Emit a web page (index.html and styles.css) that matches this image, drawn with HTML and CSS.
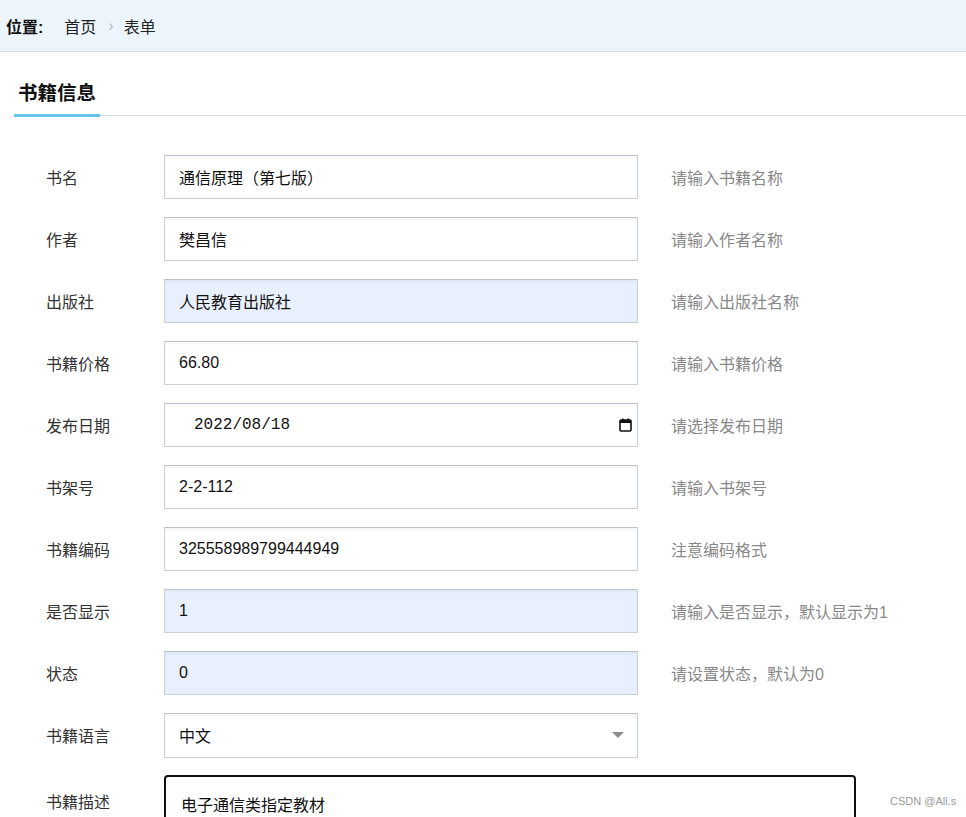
FILE: index.html
```html
<!DOCTYPE html>
<html lang="zh-CN">
<head>
<meta charset="utf-8">
<title>书籍信息</title>
<link rel="stylesheet" href="styles.css">
</head>
<body>
<div class="crumb">
  <span class="crumb-label">位置:</span>
  <span class="crumb-item">首页</span>
  <span class="crumb-sep">›</span>
  <span class="crumb-item">表单</span>
</div>
<div class="tabbar">
  <div class="tab">书籍信息</div>
</div>
<form class="form">
  <div class="row"><label class="label">书名</label><input class="field" type="text" value="通信原理（第七版）"><span class="hint">请输入书籍名称</span></div>
  <div class="row"><label class="label">作者</label><input class="field" type="text" value="樊昌信"><span class="hint">请输入作者名称</span></div>
  <div class="row"><label class="label">出版社</label><input class="field filled" type="text" value="人民教育出版社"><span class="hint">请输入出版社名称</span></div>
  <div class="row"><label class="label">书籍价格</label><input class="field" type="text" value="66.80"><span class="hint">请输入书籍价格</span></div>
  <div class="row"><label class="label">发布日期</label>
    <div class="date-wrap"><input class="field date" type="text" value="2022/08/18">
      <svg class="cal" width="13" height="14" viewBox="0 0 13 14"><rect x="1" y="2" width="11" height="11" rx="1" fill="none" stroke="#111" stroke-width="1.6"/><rect x="1" y="2" width="11" height="3" fill="#111"/><rect x="3" y="0.5" width="1.6" height="2.5" fill="#111"/><rect x="8.4" y="0.5" width="1.6" height="2.5" fill="#111"/></svg>
    </div>
    <span class="hint">请选择发布日期</span></div>
  <div class="row"><label class="label">书架号</label><input class="field" type="text" value="2-2-112"><span class="hint">请输入书架号</span></div>
  <div class="row"><label class="label">书籍编码</label><input class="field" type="text" value="325558989799444949"><span class="hint">注意编码格式</span></div>
  <div class="row"><label class="label">是否显示</label><input class="field filled" type="text" value="1"><span class="hint">请输入是否显示，默认显示为1</span></div>
  <div class="row"><label class="label">状态</label><input class="field filled" type="text" value="0"><span class="hint">请设置状态，默认为0</span></div>
  <div class="row"><label class="label">书籍语言</label>
    <div class="select"><span>中文</span><span class="caret"></span></div>
  </div>
  <div class="row top"><label class="label desc-label">书籍描述</label><textarea class="textarea">电子通信类指定教材</textarea></div>
</form>
<div class="watermark">CSDN @Ali.s</div>
</body>
</html>
```
FILE: styles.css
```css
html, body {
  margin: 0;
  padding: 0;
  height: 817px;
  overflow: hidden;
  background: #fff;
  font-family: "Liberation Sans", "Noto Sans CJK SC", sans-serif;
  color: #222;
}
.crumb {
  background: #edf5fc;
  border-bottom: 1px solid #d0dde8;
  display: flex;
  align-items: center;
  padding-left: 6px;
  font-size: 16px;
  box-sizing: border-box;
  height: 52px;
}
.crumb-label {
  font-weight: bold;
  color: #111;
  margin-right: 21px;
}
.crumb-item {
  color: #222;
}
.crumb-sep {
  color: #b3bec8;
  margin: 0 10px 0 12px;
  font-size: 16px;
}
.tabbar {
  margin-left: 14px;
  margin-top: 26px;
  border-bottom: 1px solid #d9dfe5;
  display: flex;
}
.tab {
  padding: 0 4px 6px;
  font-size: 19.5px;
  font-weight: bold;
  color: #111;
  line-height: 30px;
  border-bottom: 3px solid #66c6ef;
  margin-bottom: -2px;
}
.form {
  padding-top: 39px;
  display: flex;
  flex-direction: column;
  gap: 18px;
}
.row {
  display: flex;
  align-items: center;
  height: 44px;
}
.label {
  width: 118px;
  padding-left: 46px;
  font-size: 16px;
  color: #333;
  flex-shrink: 0;
}
.field {
  box-sizing: border-box;
  width: 474px;
  height: 44px;
  border: 1px solid #c6d0d9;
  border-top-color: #b9c4cd;
  box-shadow: inset 0 2px 3px rgba(0, 0, 0, 0.04);
  padding: 0 14px;
  font-size: 16px;
  font-family: "Liberation Sans", "Noto Sans CJK SC", sans-serif;
  color: #111;
  background: #fff;
  outline: none;
  margin: 0;
}
.field.filled {
  background: #e8f0fe;
}
.hint {
  margin-left: 33px;
  font-size: 16px;
  color: #888;
}
.date-wrap {
  position: relative;
  width: 474px;
  height: 44px;
}
.field.date {
  font-family: "Liberation Mono", monospace;
  padding-left: 29px;
}
.cal {
  position: absolute;
  left: 455px;
  top: 15px;
}
.select {
  box-sizing: border-box;
  width: 474px;
  height: 45px;
  border: 1px solid #c6d0d9;
  border-top-color: #b9c4cd;
  box-shadow: inset 0 3px 4px rgba(0, 0, 0, 0.04);
  display: flex;
  align-items: center;
  justify-content: space-between;
  padding: 0 13px 0 14px;
  font-size: 16px;
  color: #111;
}
.caret {
  width: 0;
  height: 0;
  border-left: 6px solid transparent;
  border-right: 6px solid transparent;
  border-top: 6px solid #8c8c8c;
}
.row.top {
  align-items: flex-start;
  height: auto;
}
.desc-label {
  padding-top: 14px;
}
.textarea {
  box-sizing: border-box;
  width: 692px;
  height: 100px;
  border: 2px solid #111;
  border-radius: 4px;
  padding: 15px 15px;
  font-size: 16px;
  font-family: "Liberation Sans", "Noto Sans CJK SC", sans-serif;
  color: #111;
  resize: none;
  outline: none;
  margin: 0;
}
.watermark {
  position: absolute;
  left: 890px;
  top: 795px;
  font-size: 11px;
  color: #999;
  font-family: "Liberation Sans", sans-serif;
}
```
